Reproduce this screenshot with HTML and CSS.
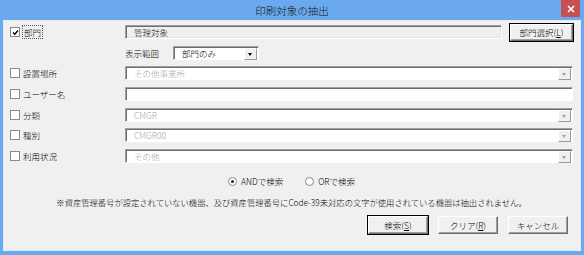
FILE: index.html
```html
<!DOCTYPE html>
<html lang="ja">
<head>
  <meta charset="UTF-8">
  <title>印刷対象の抽出</title>
  <link rel="stylesheet" href="styles.css">
</head>
<body>

<div class="window">
  <div class="titlebar">
    <span class="title">印刷対象の抽出</span>
    <span class="close">
      <svg width="8" height="8" viewBox="0 0 8 8"><path d="M1 1L7 7M7 1L1 7" stroke="#fff" stroke-width="1.6"/></svg>
    </span>
  </div>

  <div class="client">
    <div class="rows">
      <div class="row">
        <label class="check">
          <span class="box"><svg width="7" height="7" viewBox="0 0 7 7"><path d="M1 3.5L2.8 5.3L6 1.5" fill="none" stroke="#000" stroke-width="1.4"/></svg></span>
          <span class="focus">部門</span>
        </label>
        <div class="dept">
          <div class="field readonly">管理対象</div>
          <button class="btn default">部門選択(<u>L</u>)</button>
        </div>
      </div>

      <div class="row">
        <span></span>
        <div class="range">
          <span class="range-label">表示範囲</span>
          <div class="field combo active">部門のみ<span class="arrow"></span></div>
        </div>
      </div>

      <div class="row">
        <label class="check"><span class="box"></span>設置場所</label>
        <div class="field combo disabled">その他事業所<span class="arrow"></span></div>
      </div>

      <div class="row">
        <label class="check"><span class="box"></span>ユーザー名</label>
        <div class="field"></div>
      </div>

      <div class="row">
        <label class="check"><span class="box"></span>分類</label>
        <div class="field combo disabled">CMGR<span class="arrow"></span></div>
      </div>

      <div class="row">
        <label class="check"><span class="box"></span>種別</label>
        <div class="field combo disabled">CMGR00<span class="arrow"></span></div>
      </div>

      <div class="row">
        <label class="check"><span class="box"></span>利用状況</label>
        <div class="field combo disabled">その他<span class="arrow"></span></div>
      </div>
    </div>

    <div class="radios">
      <label class="radio"><span class="dot on"></span>ANDで検索</label>
      <label class="radio"><span class="dot"></span>ORで検索</label>
    </div>

    <p class="note">※資産管理番号が設定されていない機器、及び資産管理番号にCode-39未対応の文字が使用されている機器は抽出されません。</p>

    <div class="actions">
      <button class="btn default">検索(<u>S</u>)</button>
      <button class="btn">クリア(<u>R</u>)</button>
      <button class="btn">キャンセル</button>
    </div>
  </div>
</div>

</body>
</html>
```

FILE: styles.css
```css
body {
  margin: 0;
  font-family: "Noto Sans CJK JP", "Noto Sans", sans-serif;
  font-size: 8.5px;
  font-weight: 300;
  color: #000;
}

.window {
  width: 584px;
  height: 255px;
  background: #6aa9ee;
  display: flex;
  flex-direction: column;
  box-sizing: border-box;
}

.titlebar {
  height: 20px;
  position: relative;
  display: flex;
  align-items: center;
  justify-content: center;
}

.title {
  font-size: 10.5px;
  color: #111;
}

.close {
  position: absolute;
  top: 0;
  right: 4px;
  width: 19px;
  height: 17px;
  background: #c75050;
  display: flex;
  align-items: center;
  justify-content: center;
}

.client {
  flex: 1;
  margin: 0 3px 4px 3px;
  background: #f0f0f0;
  border: 1px solid #dcecfb;
  padding: 1px 7px 0 6px;
}

/* form rows */
.rows {
  display: flex;
  flex-direction: column;
}

.row {
  display: grid;
  grid-template-columns: 115px 1fr;
  align-items: center;
  height: 20.6px;
}

.check {
  display: flex;
  align-items: center;
  gap: 3px;
}

.box {
  width: 8px;
  height: 8px;
  background: #fff;
  border: 1px solid #8a8a8a;
  display: flex;
  align-items: center;
  justify-content: center;
}

.focus {
  outline: 1px dotted #555;
  outline-offset: 0;
  padding: 0 1px;
}

.dept {
  display: flex;
  align-items: center;
  gap: 8px;
}

.field {
  height: 14px;
  box-sizing: border-box;
  background: #fff;
  border: 1px solid;
  border-color: #a0a0a0 #fff #fff #a0a0a0;
  box-shadow: inset 1px 1px #6d6d6d;
  padding: 0 8px;
  display: flex;
  align-items: center;
  position: relative;
}

.field.readonly {
  flex: 1;
  background: #f0f0f0;
  box-shadow: inset 1px 1px #6d6d6d, inset -1px -1px #e3e3e3;
}

.combo.disabled {
  color: #a5a5a5;
}

.arrow {
  position: absolute;
  right: 1px;
  top: 1px;
  width: 11px;
  height: 10px;
  background: #f0f0f0;
  border: 1px solid;
  border-color: #fff #9a9a9a #9a9a9a #fff;
}

.arrow::after {
  content: "";
  position: absolute;
  left: 3px;
  top: 4px;
  border-left: 2.5px solid transparent;
  border-right: 2.5px solid transparent;
  border-top: 3px solid #a0a0a0;
}

.combo.active .arrow::after {
  border-top-color: #000;
}

.range {
  display: flex;
  align-items: center;
  gap: 14px;
}

.range .combo {
  width: 86px;
}

/* search mode */
.radios {
  display: flex;
  justify-content: center;
  gap: 22px;
  margin-top: 9px;
  padding-left: 0;
}

.radio {
  display: flex;
  align-items: center;
  gap: 4px;
}

.dot {
  width: 7px;
  height: 7px;
  border-radius: 50%;
  background: #fff;
  border: 1px solid #8a8a8a;
  display: flex;
  align-items: center;
  justify-content: center;
}

.dot.on::after {
  content: "";
  width: 3px;
  height: 3px;
  border-radius: 50%;
  background: #222;
}

.note {
  margin: 9px 0 0;
  text-align: center;
  font-size: 8.3px;
}

.actions {
  display: flex;
  justify-content: flex-end;
  gap: 10px;
  margin-top: 8px;
  padding-right: 5px;
}

.btn {
  font-family: inherit;
  font-size: 8.5px;
  font-weight: 300;
  width: 60px;
  height: 18px;
  padding: 0;
  background: #f0f0f0;
  border: 1px solid;
  border-color: #fff #6d6d6d #6d6d6d #fff;
  box-shadow: inset -1px -1px #a0a0a0;
  color: #000;
}

.btn.default {
  outline: 1px solid #000;
  outline-offset: 0;
}

.dept .btn {
  width: 63px;
  height: 17px;
}
```
